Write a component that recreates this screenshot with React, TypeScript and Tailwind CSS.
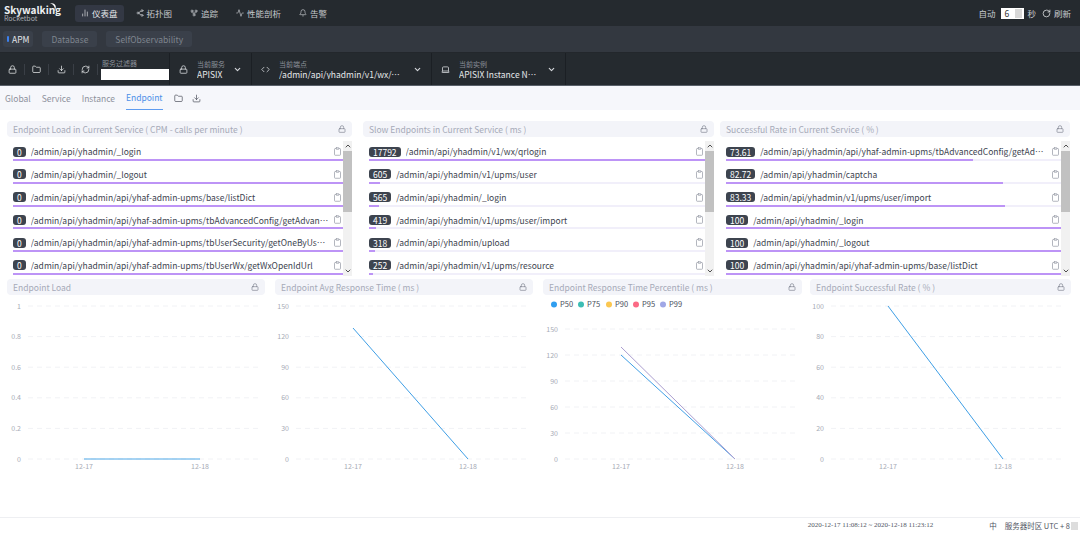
import React from "react";
import { Lock, Folder, Download, RefreshCw, ChevronDown, ChevronUp, Code, Laptop, Clipboard, RotateCw, Bell, Activity, BarChart2, GitFork, Share2 } from "lucide-react";

const font = { fontFamily: '"Noto Sans CJK SC", sans-serif' } as const;

type Row = [string, string, number];
const L1: Row[] = [
  ["0", "/admin/api/yhadmin/_login", 100],
  ["0", "/admin/api/yhadmin/_logout", 100],
  ["0", "/admin/api/yhadmin/api/yhaf-admin-upms/base/listDict", 100],
  ["0", "/admin/api/yhadmin/api/yhaf-admin-upms/tbAdvancedConfig/getAdvancedConfig", 100],
  ["0", "/admin/api/yhadmin/api/yhaf-admin-upms/tbUserSecurity/getOneByUserName", 100],
  ["0", "/admin/api/yhadmin/api/yhaf-admin-upms/tbUserWx/getWxOpenIdUrl", 100],
];
const L2: Row[] = [
  ["17792", "/admin/api/yhadmin/v1/wx/qrlogin", 100],
  ["605", "/admin/api/yhadmin/v1/upms/user", 3.2],
  ["565", "/admin/api/yhadmin/_login", 3],
  ["419", "/admin/api/yhadmin/v1/upms/user/import", 2.2],
  ["318", "/admin/api/yhadmin/upload", 1.7],
  ["252", "/admin/api/yhadmin/v1/upms/resource", 1.3],
];
const L3: Row[] = [
  ["73.61", "/admin/api/yhadmin/api/yhaf-admin-upms/tbAdvancedConfig/getAdvancedConfig", 73.6],
  ["82.72", "/admin/api/yhadmin/captcha", 82.7],
  ["83.33", "/admin/api/yhadmin/v1/upms/user/import", 83.3],
  ["100", "/admin/api/yhadmin/_login", 100],
  ["100", "/admin/api/yhadmin/_logout", 100],
  ["100", "/admin/api/yhadmin/api/yhaf-admin-upms/base/listDict", 100],
];

function Header({ title }: { title: string }) {
  return (
    <div className="flex h-4 items-center justify-between rounded-sm bg-[#f3f4f9] pl-[6px] pr-[6px] text-[8.5px] text-[#a6aab8]">
      <span className="truncate">{title}</span>
      <Lock size={8} className="shrink-0 text-[#7d8290]" />
    </div>
  );
}

function TopList({ title, rows, className }: { title: string; rows: Row[]; className: string }) {
  return (
    <div className={className}>
      <Header title={title} />
      <div className="mt-1 flex h-[135px] pl-[6px]">
        <div className="min-w-0 flex-1">
          {rows.map((r, i) => (
            <div key={i} className="h-[22.8px] pt-[4px]">
              <div className="flex h-[13px] items-center">
                <span className="mr-[5px] shrink-0 rounded-[3px] bg-[#3d444f] px-[4px] text-[8.5px] leading-[10px] text-white">{r[0]}</span>
                <span className="min-w-0 flex-1 truncate text-[8.5px] text-[#3d444f]">{r[1]}</span>
                <Clipboard size={9} className="ml-1 mr-[1px] shrink-0 text-[#9a9ea8]" />
              </div>
              <div className="mt-[1px] h-[2px] bg-[#f1effa]">
                <div className="h-full bg-[#bd94f6]" style={{ width: r[2] + "%" }} />
              </div>
            </div>
          ))}
        </div>
        <div className="flex w-[9px] shrink-0 flex-col items-center bg-[#f1f1f1]">
          <ChevronUp size={8} strokeWidth={3} className="h-[10px] text-[#505050]" />
          <div className="h-[61px] w-full bg-[#c1c1c1]" />
          <div className="flex-1" />
          <ChevronDown size={8} strokeWidth={3} className="h-[10px] text-[#505050]" />
        </div>
      </div>
    </div>
  );
}

type ChartCfg = {
  w: number;
  ox: number;
  ticks: string[];
  ys?: number[];
  x1: number;
  x2: number;
  lines: { pts: string; color: string }[];
  gridEnd: number;
};

function Chart({ title, cfg, legend, className }: { title: string; cfg: ChartCfg; legend?: boolean; className: string }) {
  const top = 307;
  const ys = cfg.ys ?? cfg.ticks.map((_, i) => top + i * 30.6);
  return (
    <div className={className}>
      <Header title={title} />
      <svg width={cfg.w} height={192} viewBox={`0 296 ${cfg.w} 192`} className="block">
        {ys.map((y, i) => (
          <g key={i}>
            <line x1={cfg.ox} x2={cfg.gridEnd} y1={y} y2={y} stroke="#f1f2f5" strokeWidth="1" strokeDasharray="5 4" />
            <text x={cfg.ox - 7} y={y + 2.5} fontSize="7" textAnchor="end" fill="#a7abb6" style={font}>{cfg.ticks[i]}</text>
          </g>
        ))}
        <text x={cfg.x1} y={470} fontSize="7" textAnchor="middle" fill="#a7abb6" style={font}>12-17</text>
        <text x={cfg.x2} y={470} fontSize="7" textAnchor="middle" fill="#a7abb6" style={font}>12-18</text>
        {cfg.lines.map((l, i) => (
          <polyline key={i} points={l.pts} fill="none" stroke={l.color} strokeWidth="1" />
        ))}
        {legend &&
          [["P50", "#2f9ef0", 8], ["P75", "#3dbdb4", 35], ["P90", "#fbc750", 63], ["P95", "#fb6a85", 90], ["P99", "#a0a7e6", 117]].map(([n, c, x]) => (
            <g key={n as string}>
              <circle cx={(x as number) + 3} cy={305.5} r={3} fill={c as string} />
              <text x={(x as number) + 9} y={308} fontSize="7.5" fill="#4a4f5c" style={font}>{n}</text>
            </g>
          ))}
      </svg>
    </div>
  );
}

const NAV = [
  { t: "仪表盘", I: BarChart2, active: true },
  { t: "拓扑图", I: Share2 },
  { t: "追踪", I: GitFork },
  { t: "性能剖析", I: Activity },
  { t: "告警", I: Bell },
];

function Sel({ label, value, icon, w }: { label: string; value: string; icon: React.ReactNode; w: string }) {
  return (
    <div className={`flex h-full shrink-0 items-center border-r border-[#1b1f24] ${w}`}>
      <span className="flex w-[27px] shrink-0 justify-center text-[#dfe2e6]">{icon}</span>
      <div className="min-w-0 flex-1 leading-[9px]">
        <div className="text-[7px] text-[#8b9099]">{label}</div>
        <div className="mt-[1px] truncate text-[8.5px] text-[#e6e8ea]">{value}</div>
      </div>
      <ChevronDown size={9} strokeWidth={3} className="mr-[9px] ml-[8px] shrink-0 text-[#d5d8dc]" />
    </div>
  );
}

export default function App() {
  const c1: ChartCfg = { w: 268, ox: 21, ticks: ["1", "0.8", "0.6", "0.4", "0.2", "0"], x1: 77, x2: 193, gridEnd: 253, lines: [{ pts: "77,460 193,460", color: "#4fa8e8" }] };
  const c2: ChartCfg = { w: 268, ox: 21, ticks: ["150", "120", "90", "60", "30", "0"], x1: 78, x2: 193, gridEnd: 253, lines: [{ pts: "78,329 193,460", color: "#3f9fe6" }] };
  const c3: ChartCfg = { w: 268, ox: 22, ticks: ["150", "120", "90", "60", "30", "0"], ys: [330, 356, 382, 408, 434, 460], x1: 78, x2: 192, gridEnd: 252, lines: [{ pts: "78,356 192,460", color: "#3f9fe6" }, { pts: "78,348 192,460", color: "#ab9ed0" }] };
  const c4: ChartCfg = { w: 261, ox: 21, ticks: ["100", "80", "60", "40", "20", "0"], x1: 78, x2: 193, gridEnd: 253, lines: [{ pts: "78,307 193,460", color: "#3f9fe6" }] };

  return (
    <div className="flex h-[533px] w-[1080px] flex-col overflow-hidden bg-white" style={font}>
      <div className="flex h-[26px] shrink-0 items-center bg-[#252a2f] text-[8.5px] text-[#c6c9cd]">
        <div className="relative ml-1 w-[71px] leading-none">
          <div className="text-[10px] font-bold text-[#eef0f2]">Skywalking</div>
          <div className="text-[7px] text-[#a9adb3]">Rocketbot</div>
          <svg className="absolute left-[44px] top-[-3px]" width="12" height="12" viewBox="0 0 12 12"><path d="M2 1 C7 1 10 4 6 10 C8 5 6 3 2 1Z" fill="#fff" /></svg>
        </div>
        {NAV.map((n) => (
          <div key={n.t} className={`mr-[6px] flex h-[17px] items-center gap-[3px] rounded-[3px] px-[6px] ${n.active ? "bg-[#333844] text-[#e4e6e9]" : ""}`} >
            <n.I size={8} />
            <span>{n.t}</span>
          </div>
        ))}
        <div className="flex-1" />
        <span className="mr-[6px]">自动</span>
        <div className="flex h-[11px] w-[23px] items-center justify-between bg-white pl-[3px] pr-[2px] text-[#e07a30]">
          <span className="text-[8.5px] leading-none text-[#333]">6</span>
          <span className="h-[9px] w-[7px] bg-[#d8d8d8]" />
        </div>
        <span className="ml-[3px] mr-[6px]">秒</span>
        <RotateCw size={9} className="mr-[3px] text-[#e6e8ea]" />
        <span className="mr-[9px]">刷新</span>
      </div>

      <div className="flex h-[27px] shrink-0 items-center gap-[9px] border-b border-[#23272c] bg-[#333840] pl-[3px] text-[8.5px] text-[#7f858e]">
        <div className="flex h-[16px] items-center gap-[3px] rounded-[3px] bg-[#3a404a] px-[4px] text-[#e3e6ea]">
          <span className="h-[6px] w-[2px] rounded-sm bg-[#3c80ee]" />
          APM
        </div>
        <div className="flex h-[16px] items-center rounded-[3px] bg-[#3a404a] px-[9px]">Database</div>
        <div className="flex h-[16px] items-center rounded-[3px] bg-[#3a404a] px-[9px]">SelfObservability</div>
      </div>

      <div className="flex h-[33px] shrink-0 items-center border-b border-[#596069] bg-[#252a2f] text-[#e6e8ea]">
        <div className="flex h-full w-[170px] shrink-0 items-center border-r border-[#1b1f24]">
          {[Lock, Folder, Download, RefreshCw].map((I, i) => (
            <span key={i} className="flex h-[11px] w-[25px] items-center justify-center border-r border-[#3a3f46] pl-[1px] last:border-r-[#3a3f46]">
              <I size={9} />
            </span>
          ))}
          <div className="ml-[3px] leading-[9px]">
            <div className="pl-[1px] text-[7px] text-[#8b9099]">服务过滤器</div>
            <div className="mt-[1px] h-[11px] w-[68px] bg-white" />
          </div>
        </div>
        <Sel label="当前服务" value="APISIX" icon={<Lock size={9} />} w="w-[82px]" />
        <Sel label="当前端点" value="/admin/api/yhadmin/v1/wx/qrcode" icon={<Code size={9} />} w="w-[180px]" />
        <Sel label="当前实例" value="APISIX Instance Name" icon={<Laptop size={9} />} w="w-[134px]" />
      </div>

      <div className="flex h-[24px] shrink-0 items-stretch gap-[11px] bg-[#f6f7fb] pl-[5px] text-[8.5px] text-[#8d919c]">
        <span className="flex items-center">Global</span>
        <span className="flex items-center">Service</span>
        <span className="flex items-center">Instance</span>
        <span className="flex items-center border-b-[1px] border-[#5e9cf0] text-[#4c8fe8]">Endpoint</span>
        <span className="flex items-center gap-[9px] text-[#555a64]">
          <Folder size={9} />
          <Download size={9} />
        </span>
      </div>

      <div className="flex shrink-0 pt-[11px]">
        <TopList title="Endpoint Load in Current Service ( CPM - calls per minute )" rows={L1} className="ml-[7px] mr-[11px] w-[345px] shrink-0" />
        <TopList title="Slow Endpoints in Current Service ( ms )" rows={L2} className="mr-[6px] w-[351px] shrink-0" />
        <TopList title="Successful Rate in Current Service ( % )" rows={L3} className="w-[350px] shrink-0" />
      </div>

      <div className="mt-[3px] flex shrink-0">
        <Chart title="Endpoint Load" cfg={c1} className="ml-[7px] mr-[10px] w-[258px] shrink-0" />
        <Chart title="Endpoint Avg Response Time ( ms )" cfg={c2} className="mr-[10px] w-[258px] shrink-0" />
        <Chart title="Endpoint Response Time Percentile ( ms )" cfg={c3} legend className="mr-[8px] w-[259px] shrink-0" />
        <Chart title="Endpoint Successful Rate ( % )" cfg={c4} className="w-[261px] shrink-0" />
      </div>

      <div className="mt-auto flex h-[16px] shrink-0 items-center border-t border-[#eeeff2] text-[7.5px] text-[#50555f]">
        <div className="flex-1" />
        <span className="mr-[56px] text-[7px]" style={{ fontFamily: '"Liberation Serif", serif' }}>2020-12-17 11:08:12 ~ 2020-12-18 11:23:12</span>
        <span className="mr-[8px]">中</span>
        <span className="mr-[1px]">服务器时区 UTC + 8</span>
        <span className="mr-[2px] h-[8px] w-[7px] bg-[#ddd]" />
      </div>
    </div>
  );
}
